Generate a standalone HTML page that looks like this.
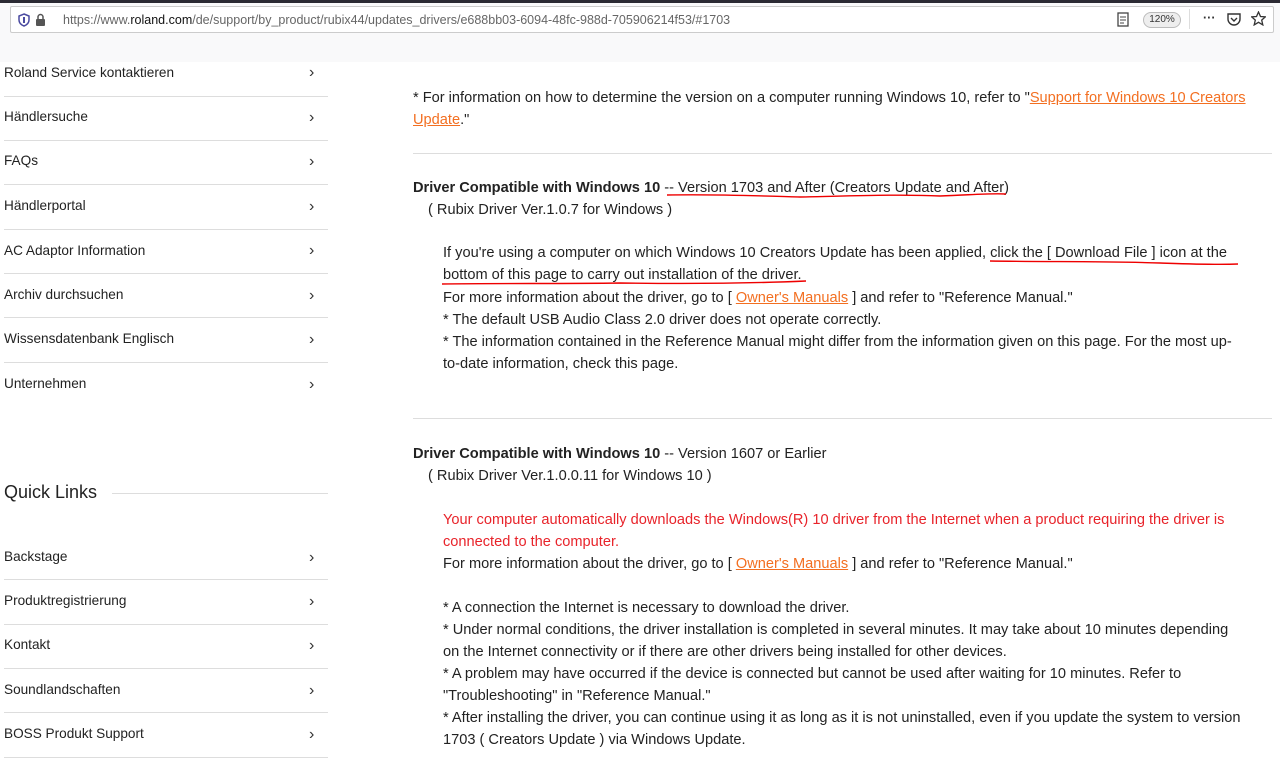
<!DOCTYPE html>
<html><head><meta charset="utf-8"><style>
*{margin:0;padding:0;box-sizing:border-box}
body{width:1280px;height:760px;overflow:hidden;background:#fff;font-family:"Liberation Sans",sans-serif;color:#222;font-size:14.6px;position:relative}
.t{position:absolute;white-space:nowrap;line-height:22px}
.s{font-size:13.6px}
.bar{position:absolute;left:0;top:0;width:1280px;height:62px;background:#f9f9fa}
.dark{position:absolute;left:0;top:0;width:1280px;height:3px;background:#2b2a33}
.url{position:absolute;left:10px;top:6px;width:1264px;height:27px;background:#fff;border:1px solid #ccc;border-radius:2px;font-size:12.5px;color:#666}
.side{position:absolute;left:4px;width:324px;height:1px;background:#ddd}
.chev{position:absolute;left:309px;font-size:16px;color:#333}
.o{color:#f36f21;text-decoration:underline}
.r{color:#e8232a}
.hr{position:absolute;left:413px;width:859px;height:1px;background:#ddd}
.m{position:absolute;left:0;top:1px;width:1280px;height:760px}
</style></head><body>
<div class="bar"></div><div class="dark"></div>
<div class="url">
<svg style="position:absolute;left:7px;top:6px" width="12" height="14"><path d="M6 1L11 3V7C11 10 8.5 12 6 13C3.5 12 1 10 1 7V3Z" fill="none" stroke="#4a4aa0" stroke-width="1.5"/><rect x="5" y="4" width="2" height="6" fill="#4a4aa0"/></svg>
<svg style="position:absolute;left:24px;top:6px" width="11" height="14"><path d="M3 6V4a2.5 2.5 0 0 1 5 0V6" fill="none" stroke="#555" stroke-width="1.5"/><rect x="1" y="6" width="9" height="7" rx="1" fill="#555"/></svg>
<span class="t" style="left:52px;top:2px">https://www.<span style="color:#111">roland.com</span>/de/support/by_product/rubix44/updates_drivers/e688bb03-6094-48fc-988d-705906214f53/#1703</span>
<svg style="position:absolute;left:1106px;top:5px" width="12" height="15"><rect x="1" y="1" width="10" height="13" fill="none" stroke="#444" stroke-width="1.3"/><path d="M3 5h6M3 8h6M3 11h4" stroke="#444"/></svg>
<div style="position:absolute;left:1132px;top:5px;width:38px;height:16px;border:1px solid #bbb;border-radius:8px;background:#eee;font-size:10px;text-align:center;line-height:14px;color:#333">120%</div>
<div style="position:absolute;left:1178px;top:2px;width:1px;height:20px;background:#ddd"></div>
<span class="t" style="left:1192px;top:0px;color:#333;font-weight:bold">···</span>
<svg style="position:absolute;left:1216px;top:5px" width="14" height="14"><path d="M1 2h12v5a6 6 0 0 1-12 0Z" fill="none" stroke="#333" stroke-width="1.4"/><path d="M4 6l3 3 3-3" fill="none" stroke="#333" stroke-width="1.4"/></svg>
<svg style="position:absolute;left:1240px;top:4px" width="15" height="15"><path d="M7.5 1l2 4.5 4.8.4-3.6 3.2 1.1 4.8-4.3-2.6-4.3 2.6 1.1-4.8L.7 5.9l4.8-.4z" fill="none" stroke="#333" stroke-width="1.3"/></svg>
</div>

<!-- sidebar -->
<div class="t s" style="left:4px;top:62px">Roland Service kontaktieren</div><div class="chev t" style="top:62px">›</div><div class="side" style="top:96px"></div>
<div class="t s" style="left:4px;top:106px">Händlersuche</div><div class="chev t" style="top:107px">›</div><div class="side" style="top:140px"></div>
<div class="t s" style="left:4px;top:150px">FAQs</div><div class="chev t" style="top:151px">›</div><div class="side" style="top:184px"></div>
<div class="t s" style="left:4px;top:195px">Händlerportal</div><div class="chev t" style="top:196px">›</div><div class="side" style="top:229px"></div>
<div class="t s" style="left:4px;top:240px">AC Adaptor Information</div><div class="chev t" style="top:240px">›</div><div class="side" style="top:273px"></div>
<div class="t s" style="left:4px;top:284px">Archiv durchsuchen</div><div class="chev t" style="top:285px">›</div><div class="side" style="top:317px"></div>
<div class="t s" style="left:4px;top:328px">Wissensdatenbank Englisch</div><div class="chev t" style="top:329px">›</div><div class="side" style="top:362px"></div>
<div class="t s" style="left:4px;top:373px">Unternehmen</div><div class="chev t" style="top:374px">›</div>

<div class="t" style="left:4px;top:481px;font-size:18px">Quick Links</div><div class="side" style="left:112px;width:216px;top:493px"></div>
<div class="t s" style="left:4px;top:546px">Backstage</div><div class="chev t" style="top:547px">›</div><div class="side" style="top:579px"></div>
<div class="t s" style="left:4px;top:590px">Produktregistrierung</div><div class="chev t" style="top:591px">›</div><div class="side" style="top:624px"></div>
<div class="t s" style="left:4px;top:634px">Kontakt</div><div class="chev t" style="top:635px">›</div><div class="side" style="top:668px"></div>
<div class="t s" style="left:4px;top:679px">Soundlandschaften</div><div class="chev t" style="top:680px">›</div><div class="side" style="top:712px"></div>
<div class="t s" style="left:4px;top:723px">BOSS Produkt Support</div><div class="chev t" style="top:724px">›</div><div class="side" style="top:757px"></div>

<div class="hr" style="top:153px"></div>
<div class="hr" style="top:418px"></div>
<!-- main -->
<div class="m">
<div class="t" style="left:413px;top:86px">* For information on how to determine the version on a computer running Windows 10, refer to "<span class="o">Support for Windows 10 Creators</span></div>
<div class="t" style="left:413px;top:108px"><span class="o">Update</span>."</div>
<div class="t" style="left:413px;top:176px"><b>Driver Compatible with Windows 10</b> -- Version 1703 and After (Creators Update and After)</div>
<div class="t" style="left:428px;top:198px">( Rubix Driver Ver.1.0.7 for Windows )</div>
<div class="t" style="left:443px;top:241px">If you're using a computer on which Windows 10 Creators Update has been applied, click the [ Download File ] icon at the</div>
<div class="t" style="left:443px;top:263px">bottom of this page to carry out installation of the driver.</div>
<div class="t" style="left:443px;top:286px">For more information about the driver, go to [ <span class="o">Owner's Manuals</span> ] and refer to "Reference Manual."</div>
<div class="t" style="left:443px;top:308px">* The default USB Audio Class 2.0 driver does not operate correctly.</div>
<div class="t" style="left:443px;top:330px">* The information contained in the Reference Manual might differ from the information given on this page. For the most up-</div>
<div class="t" style="left:443px;top:352px">to-date information, check this page.</div>
<div class="t" style="left:413px;top:442px"><b>Driver Compatible with Windows 10</b> -- Version 1607 or Earlier</div>
<div class="t" style="left:428px;top:464px">( Rubix Driver Ver.1.0.0.11 for Windows 10 )</div>
<div class="t r" style="left:443px;top:508px">Your computer automatically downloads the Windows(R) 10 driver from the Internet when a product requiring the driver is</div>
<div class="t r" style="left:443px;top:530px">connected to the computer.</div>
<div class="t" style="left:443px;top:552px">For more information about the driver, go to [ <span class="o">Owner's Manuals</span> ] and refer to "Reference Manual."</div>
<div class="t" style="left:443px;top:596px">* A connection the Internet is necessary to download the driver.</div>
<div class="t" style="left:443px;top:618px">* Under normal conditions, the driver installation is completed in several minutes. It may take about 10 minutes depending</div>
<div class="t" style="left:443px;top:640px">on the Internet connectivity or if there are other drivers being installed for other devices.</div>
<div class="t" style="left:443px;top:662px">* A problem may have occurred if the device is connected but cannot be used after waiting for 10 minutes. Refer to</div>
<div class="t" style="left:443px;top:684px">"Troubleshooting" in "Reference Manual."</div>
<div class="t" style="left:443px;top:706px">* After installing the driver, you can continue using it as long as it is not uninstalled, even if you update the system to version</div>
<div class="t" style="left:443px;top:728px">1703 ( Creators Update ) via Windows Update.</div>
</div>

<svg style="position:absolute;left:0;top:0" width="1280" height="760">
<g fill="none" stroke="#e00" stroke-width="1.4">
<path d="M667 195C720 194 760 196 800 197 850 196 900 194 940 196 970 195 990 193 1006 194"/>
<path d="M990 261C1050 262 1100 261 1160 263 1190 264 1215 265 1238 264"/>
<path d="M442 284C500 283 560 284 620 283 690 284 760 283 806 281"/>
</g></svg>
</body></html>
